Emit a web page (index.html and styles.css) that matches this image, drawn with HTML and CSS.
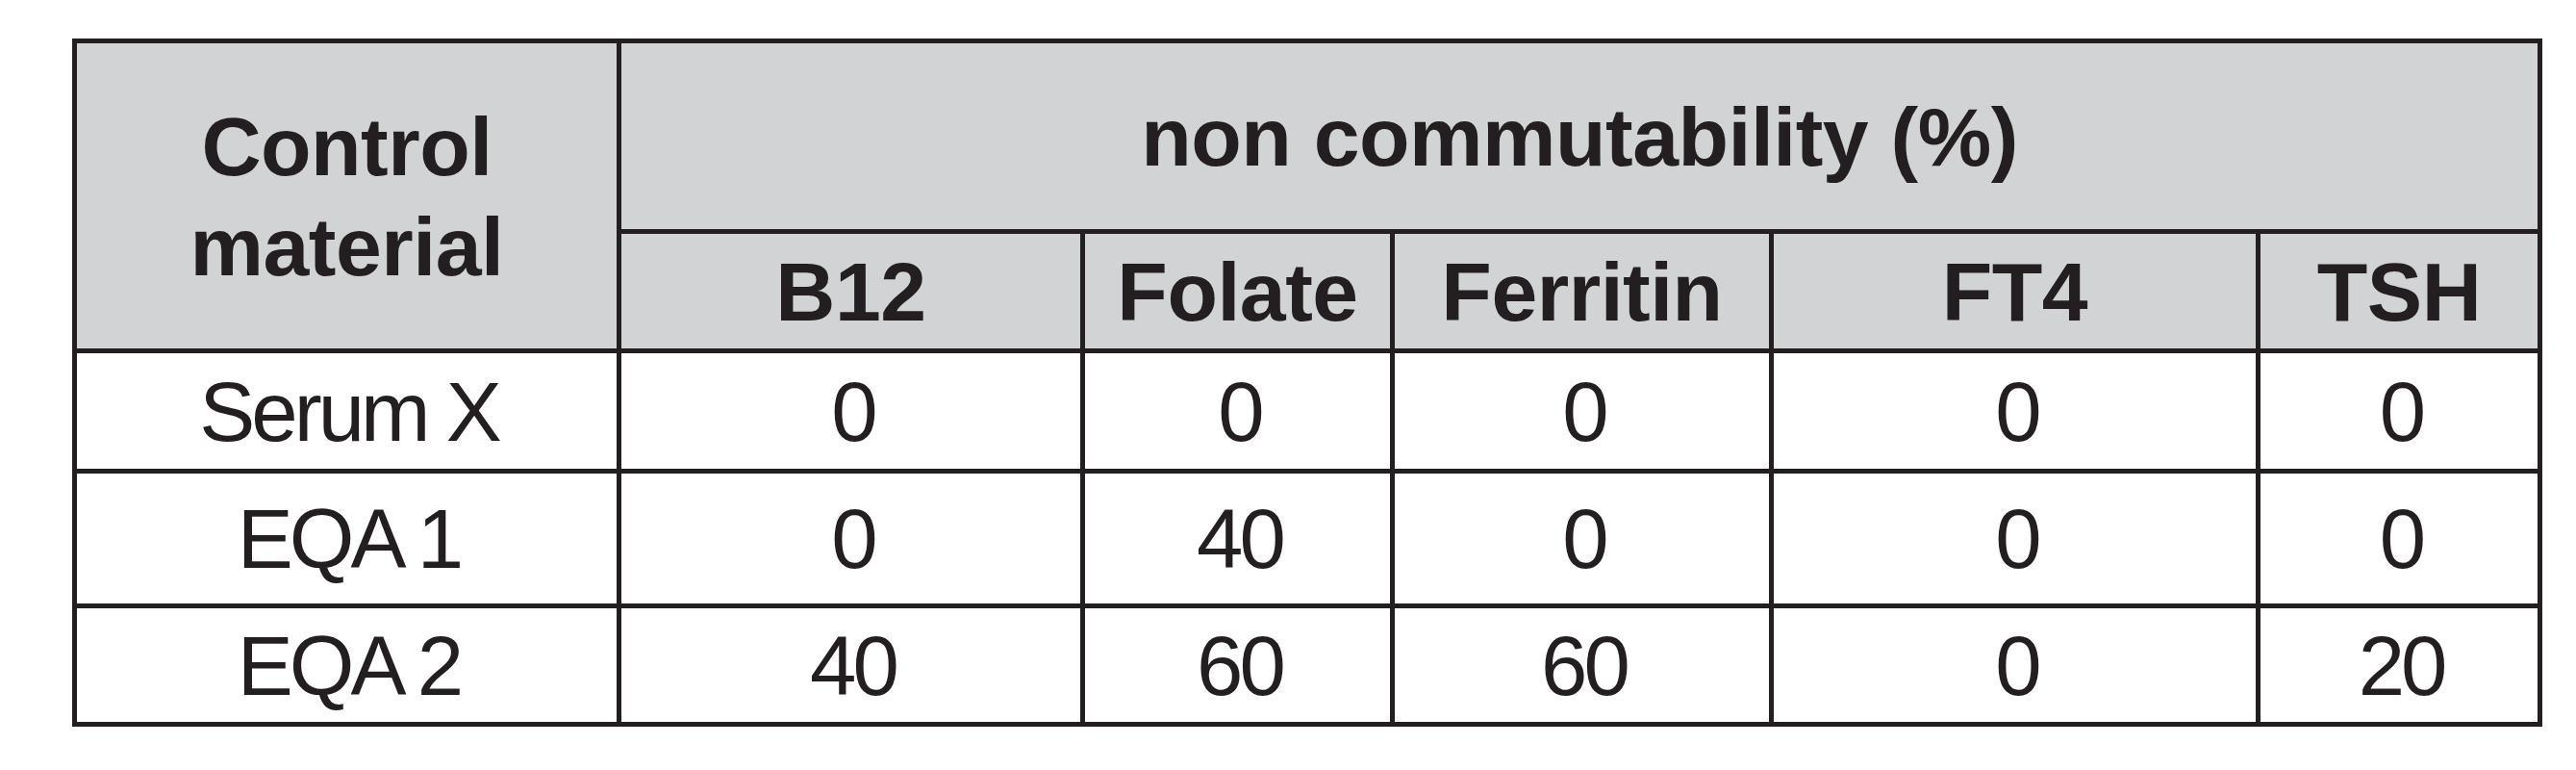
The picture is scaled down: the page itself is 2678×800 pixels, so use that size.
FILE: index.html
```html
<!DOCTYPE html>
<html lang="en">
<head>
<meta charset="utf-8">
<title>Non commutability</title>
<link rel="stylesheet" href="styles.css">
</head>
<body>
<table class="data">
  <colgroup>
    <col class="c-mat">
    <col class="c-b12">
    <col class="c-fol">
    <col class="c-fer">
    <col class="c-ft4">
    <col class="c-tsh">
  </colgroup>
  <thead>
    <tr class="h1">
      <th rowspan="2" class="mat">Control<br>material</th>
      <th colspan="5">non commutability (%)</th>
    </tr>
    <tr class="h2">
      <th>B12</th>
      <th>Folate</th>
      <th>Ferritin</th>
      <th>FT4</th>
      <th>TSH</th>
    </tr>
  </thead>
  <tbody>
    <tr class="r1">
      <td>Serum X</td><td>0</td><td>0</td><td>0</td><td>0</td><td>0</td>
    </tr>
    <tr class="r2">
      <td>EQA 1</td><td>0</td><td>40</td><td>0</td><td>0</td><td>0</td>
    </tr>
    <tr class="r3">
      <td>EQA 2</td><td>40</td><td>60</td><td>60</td><td>0</td><td>20</td>
    </tr>
  </tbody>
</table>
</body>
</html>
```

FILE: styles.css
```css
html, body {
  margin: 0;
  padding: 0;
  background: #ffffff;
}

body {
  font-family: "Liberation Sans", Arial, Helvetica, sans-serif;
  color: #231f20;
}

.data {
  border-collapse: collapse;
  table-layout: fixed;
  margin: 40px 0 0 75px;
  width: 2568px;
}

.c-mat { width: 566px; }
.c-b12 { width: 482px; }
.c-fol { width: 322px; }
.c-fer { width: 394px; }
.c-ft4 { width: 506px; }
.c-tsh { width: 293px; }

.data th,
.data td {
  border: 5px solid #231f20;
  padding: 0;
  text-align: center;
  vertical-align: middle;
}

.data th {
  background: #d1d3d4;
  font-size: 86px;
  font-weight: 700;
  line-height: 104px;
  letter-spacing: -0.5px;
}

.data td {
  font-size: 87px;
  font-weight: 400;
  letter-spacing: -4px;
  line-height: 1;
  padding-left: 4px;
}

.h1 { height: 198px; }
.h2 { height: 124px; }
.r1 { height: 125px; }
.r2 { height: 140px; }
.r3 { height: 123px; }
```
